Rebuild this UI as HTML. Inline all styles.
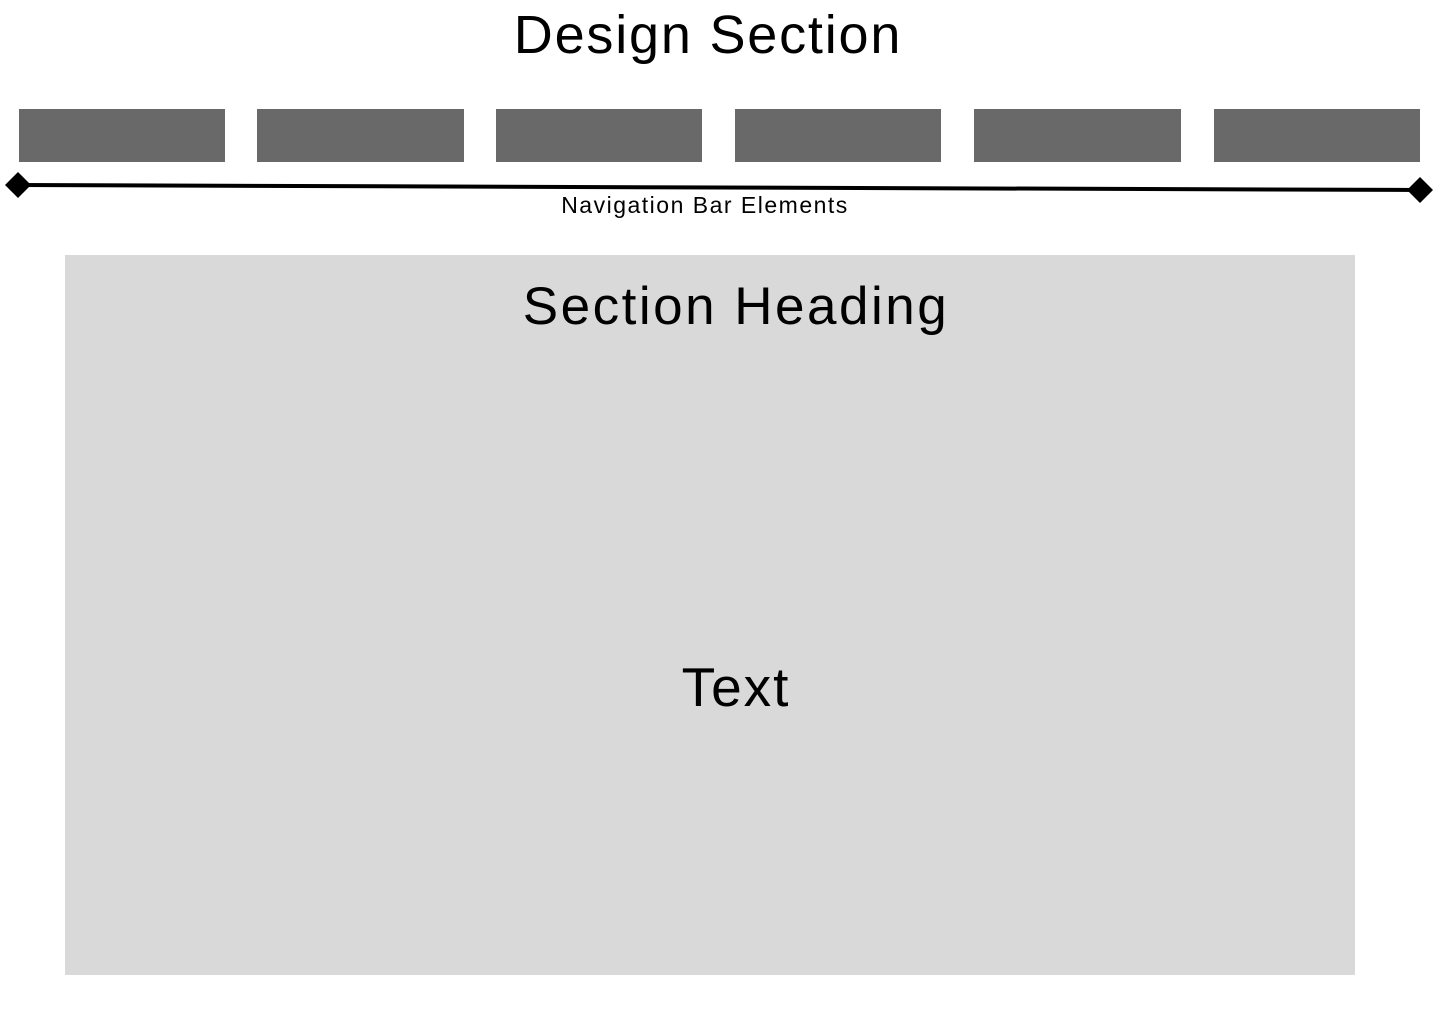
<!DOCTYPE html>
<html><head><meta charset="utf-8"><style>
html,body{margin:0;padding:0;background:#fff;width:1440px;height:1024px;overflow:hidden;font-family:"Liberation Sans",sans-serif;color:#000}
.t{position:absolute;white-space:nowrap;transform:translateX(-50%);line-height:1}
.b{position:absolute;top:109px;height:53px;background:#696969}
</style></head><body>
<div class="t" style="left:708px;top:8px;font-size:54px;letter-spacing:1.8px">Design Section</div>
<div class="b" style="left:19px;width:206px"></div>
<div class="b" style="left:257px;width:207px"></div>
<div class="b" style="left:496px;width:206px"></div>
<div class="b" style="left:735px;width:206px"></div>
<div class="b" style="left:974px;width:207px"></div>
<div class="b" style="left:1214px;width:206px"></div>
<svg style="position:absolute;left:0;top:0" width="1440" height="230">
<line x1="18" y1="185" x2="1420" y2="190" stroke="#000" stroke-width="4"/>
<polygon points="18,172 31,185 18,198 5,185" fill="#000"/>
<polygon points="1420,177 1433,190 1420,203 1407,190" fill="#000"/>
</svg>
<div class="t" style="left:705px;top:194px;font-size:23px;letter-spacing:1.5px">Navigation Bar Elements</div>
<div style="position:absolute;left:65px;top:255px;width:1290px;height:720px;background:#d9d9d9"></div>
<div class="t" style="left:736px;top:280px;font-size:53px;letter-spacing:2.5px">Section Heading</div>
<div class="t" style="left:736px;top:660px;font-size:55px;letter-spacing:2px">Text</div>
</body></html>
